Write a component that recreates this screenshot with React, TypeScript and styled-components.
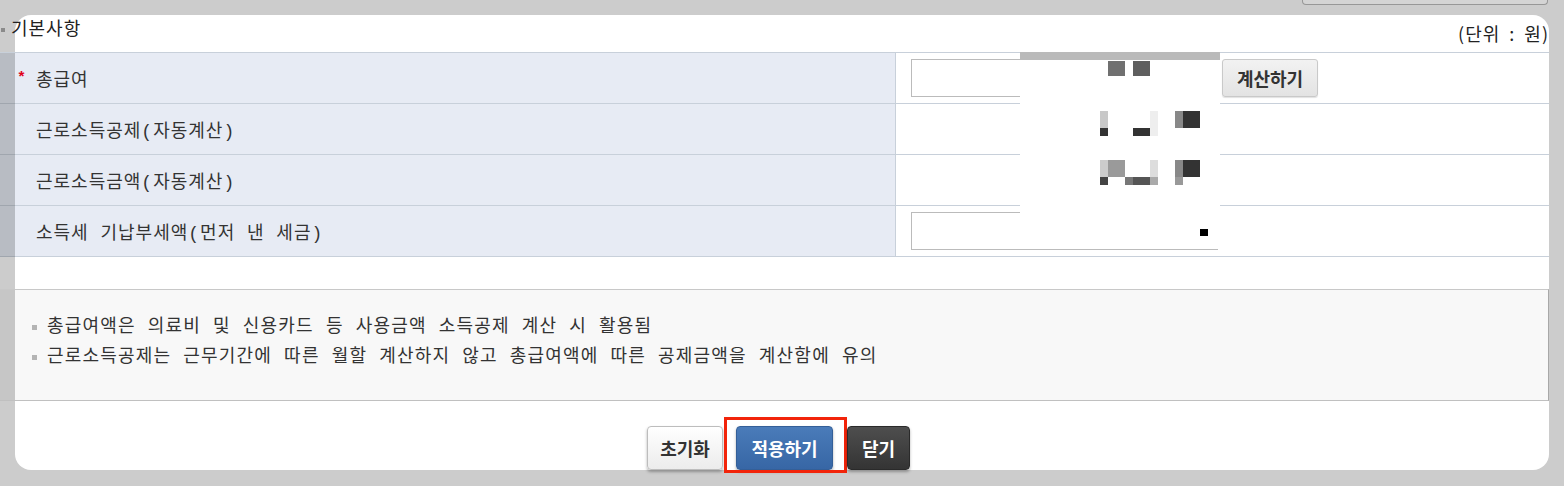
import React from "react";
import styled, { createGlobalStyle, css } from "styled-components";

// spaces and brackets come from the mono face, hangul from Noto CJK
const TEXT_FONT = `"Liberation Mono", "Noto Sans CJK KR", sans-serif`;
const CJK_FONT = `"Noto Sans CJK KR", "Noto Sans", sans-serif`;

const GlobalStyle = createGlobalStyle`
  html, body {
    margin: 0;
    padding: 0;
    background: #cccccc;
  }
  body {
    font-family: ${TEXT_FONT};
    color: #333;
  }
  * {
    box-sizing: border-box;
  }
`;

const Page = styled.div`
  width: 1564px;
  height: 486px;
  overflow: hidden;
`;

const TopStrip = styled.div`
  height: 15px;
  display: flex;
  justify-content: flex-end;
  padding-right: 16px;
`;

const HiddenButton = styled.div`
  width: 246px;
  height: 5px;
  background: #d4d4d4;
  border: 1px solid #979797;
  border-top: 0;
  border-radius: 0 0 4px 4px;
`;

const Panel = styled.div`
  margin-left: 15px;
  width: 1534px;
  height: 455px;
  background: #fff;
  border-radius: 16px;
  display: flex;
  flex-direction: column;
`;

const Header = styled.div`
  margin-left: -15px;
  height: 38px;
  display: flex;
  justify-content: space-between;
  align-items: flex-start;
  font-size: 18px;
  letter-spacing: 1px;
  line-height: 24px;
  color: #222;
`;

const Title = styled.div`
  display: flex;
  align-items: center;
  padding: 3px 0 0 1px;
  &::before {
    content: "";
    width: 4px;
    height: 4px;
    margin-right: 6px;
    background: #8a8a8a;
  }
`;

const Unit = styled.div`
  padding-top: 6px;
  font-family: ${CJK_FONT};
  word-spacing: 4px;
`;

const Dimmed = css`
  position: relative;
  margin-left: -15px;
  &::before {
    content: "";
    position: absolute;
    left: 0;
    top: 0;
    bottom: 0;
    width: 15px;
    background: rgba(0, 0, 0, 0.2);
    z-index: 2;
  }
`;

const Table = styled.div`
  ${Dimmed};
  border-top: 1px solid #c8d0da;
`;

const Row = styled.div`
  display: grid;
  grid-template-columns: 896px 1fr;
  height: 51px;
  border-bottom: 1px solid #c8d0da;
`;

const LabelCell = styled.div`
  display: flex;
  align-items: center;
  padding-left: 36px;
  background: #e7ebf4;
  border-right: 1px solid #c8d0da;
  font-size: 18px;
  letter-spacing: 1px;
  color: #333;
`;

const Required = styled.span`
  width: 19px;
  margin-left: -19px;
  color: #e0001a;
  font-size: 15px;
  font-weight: bold;
  line-height: 1;
`;

const ValueCell = styled.div`
  display: flex;
  align-items: center;
  padding-left: 15px;
`;

const Input = styled.input`
  width: 307px;
  height: 38px;
  border: 1px solid #bbb;
  background: #fff;
  outline: none;
`;

const CalcButton = styled.button`
  margin-left: 4px;
  width: 96px;
  height: 38px;
  background: linear-gradient(#f2f2f2, #e3e3e3);
  border: 1px solid #c9c9c9;
  border-radius: 3px;
  box-shadow: 0 1px 1px rgba(0, 0, 0, 0.12);
  font-family: ${CJK_FONT};
  font-size: 18px;
  font-weight: bold;
  color: #333;
`;

const Redaction = styled.svg`
  position: absolute;
  left: 1020px;
  top: -1px;
  width: 200px;
  height: 197px;
  z-index: 1;
`;

const Notice = styled.div`
  ${Dimmed};
  margin-top: 32px;
  height: 114px;
  padding: 22px 0 0 32px;
  background: #f8f8f8;
  border-top: 1px solid #c8c8c8;
  border-bottom: 1px solid #c0c0c0;
  border-right: 1px solid #a8a8a8;
  font-size: 18px;
  letter-spacing: 1.2px;
  line-height: 30px;
  color: #333;
`;

const NoticeItem = styled.div`
  display: flex;
  align-items: center;
  &::before {
    content: "";
    width: 5px;
    height: 5px;
    margin-right: 10px;
    background: #b4b4b4;
  }
`;

const Buttons = styled.div`
  margin-top: 25px;
  display: flex;
  justify-content: center;
  padding-right: 7px;
`;

type Variant = "light" | "primary" | "dark";

const variants = {
  light: css`
    background: linear-gradient(#ffffff, #ececec);
    border: 1px solid #bdbdbd;
    color: #333;
  `,
  primary: css`
    background: linear-gradient(#4a7bb9, #3766a5);
    border: 1px solid #345f98;
    color: #fff;
  `,
  dark: css`
    background: linear-gradient(#4e4e4e, #343434);
    border: 1px solid #2a2a2a;
    color: #fff;
  `,
};

const ActionButton = styled.button<{ $variant: Variant; $width: number; $highlight?: boolean }>`
  position: relative;
  width: ${(p) => p.$width}px;
  height: 44px;
  margin: 0;
  padding: 0;
  border-radius: 4px;
  box-shadow: 0 2px 3px rgba(0, 0, 0, 0.3);
  font-family: ${CJK_FONT};
  font-size: 18px;
  font-weight: bold;
  ${(p) => variants[p.$variant]};
  ${(p) =>
    p.$highlight &&
    css`
      margin: 0 14px 0 13px;
      &::after {
        content: "";
        position: absolute;
        left: -13px;
        right: -15px;
        top: -10px;
        bottom: -4px;
        border: 3px solid #f2240a;
      }
    `}
`;

const App: React.FC = () => {
  return (
    <Page>
      <GlobalStyle />
      <TopStrip>
        <HiddenButton />
      </TopStrip>
      <Panel>
        <Header>
          <Title>기본사항</Title>
          <Unit>(단위 : 원)</Unit>
        </Header>
        <Table>
          <Row>
            <LabelCell>
              <Required>*</Required>총급여
            </LabelCell>
            <ValueCell>
              <Input type="text" />
              <CalcButton>계산하기</CalcButton>
            </ValueCell>
          </Row>
          <Row>
            <LabelCell>근로소득공제(자동계산)</LabelCell>
            <ValueCell />
          </Row>
          <Row>
            <LabelCell>근로소득금액(자동계산)</LabelCell>
            <ValueCell />
          </Row>
          <Row>
            <LabelCell>소득세 기납부세액(먼저 낸 세금)</LabelCell>
            <ValueCell>
              <Input type="text" />
            </ValueCell>
          </Row>
          <Redaction viewBox="0 0 200 197">
            <rect x="0" y="0" width="200" height="197" fill="#fff" />
            <rect x="0" y="0" width="200" height="8" fill="#bababa" />
            <rect x="88" y="9" width="17" height="15" fill="#707070" />
            <rect x="113" y="9" width="17" height="15" fill="#5f5f5f" />
            <rect x="80" y="59" width="8" height="17" fill="#c8c8c8" />
            <rect x="80" y="76" width="8" height="8" fill="#333" />
            <rect x="113" y="76" width="17" height="8" fill="#333" />
            <rect x="130" y="59" width="8" height="25" fill="#eee" />
            <rect x="155" y="59" width="8" height="17" fill="#888" />
            <rect x="163" y="59" width="17" height="17" fill="#333" />
            <rect x="80" y="108" width="8" height="17" fill="#ccc" />
            <rect x="88" y="108" width="17" height="17" fill="#9a9a9a" />
            <rect x="130" y="108" width="8" height="17" fill="#ddd" />
            <rect x="155" y="108" width="8" height="17" fill="#888" />
            <rect x="163" y="108" width="17" height="17" fill="#333" />
            <rect x="80" y="125" width="8" height="8" fill="#444" />
            <rect x="105" y="125" width="8" height="8" fill="#777" />
            <rect x="113" y="125" width="17" height="8" fill="#555" />
            <rect x="130" y="125" width="8" height="8" fill="#aaa" />
            <rect x="155" y="125" width="8" height="8" fill="#999" />
            <rect x="180" y="177" width="8" height="7" fill="#000" />
          </Redaction>
        </Table>
        <Notice>
          <NoticeItem>총급여액은 의료비 및 신용카드 등 사용금액 소득공제 계산 시 활용됨</NoticeItem>
          <NoticeItem>
            근로소득공제는 근무기간에 따른 월할 계산하지 않고 총급여액에 따른 공제금액을 계산함에 유의
          </NoticeItem>
        </Notice>
        <Buttons>
          <ActionButton $variant="light" $width={76}>
            초기화
          </ActionButton>
          <ActionButton $variant="primary" $width={97} $highlight>
            적용하기
          </ActionButton>
          <ActionButton $variant="dark" $width={63}>
            닫기
          </ActionButton>
        </Buttons>
      </Panel>
    </Page>
  );
};

export default App;
